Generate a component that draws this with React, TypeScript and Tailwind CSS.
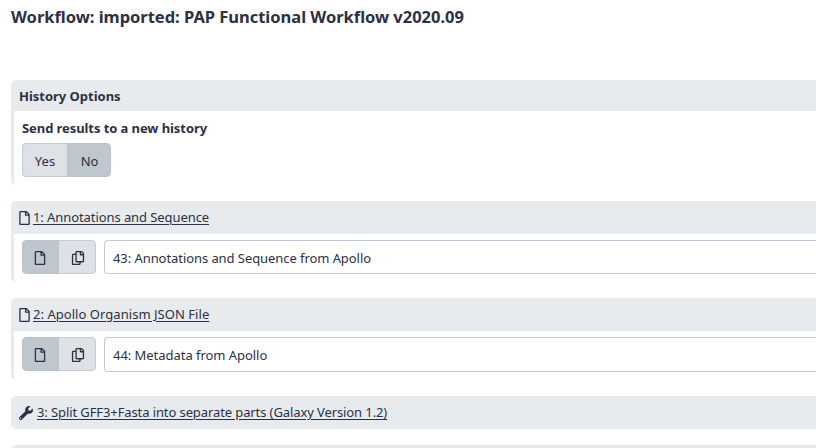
import type { ReactNode } from "react";
import { FaRegCopy, FaRegFile, FaWrench } from "react-icons/fa";

function Card({ header, className, headerClass, children }: { header: ReactNode; className: string; headerClass: string; children?: ReactNode }) {
  return (
    <section className={`shrink-0 overflow-hidden rounded-l-[5px] border-l-[3px] border-[#e8ebee] ${className}`}>
      <div className={`flex items-center bg-[#e8ebee] pl-[5px] ${headerClass}`}>{header}</div>
      {children}
    </section>
  );
}

function StepTitle({ icon, text, className }: { icon: ReactNode; text: string; className: string }) {
  return (
    <>
      {icon}
      <a className={`underline decoration-1 underline-offset-2 ${className}`}>{text}</a>
    </>
  );
}

function DataInput({ value, fieldClass, className }: { value: string; fieldClass: string; className: string }) {
  return (
    <div className="flex pl-2 pt-[6px]">
      <div className="flex h-[34px] w-[74px] shrink-0 overflow-hidden rounded-[4px]">
        <button className="flex w-[37px] items-center justify-center rounded-l-[4px] border border-[#b9c1cd] bg-[#bfc7ce] pr-px pt-[2px]">
          <FaRegFile className="size-[14px]" />
        </button>
        <button className="flex flex-1 items-center justify-center rounded-r-[4px] border border-l-0 border-[#c5cad9] bg-[#dee1e6] pt-[2px] pl-px">
          <FaRegCopy className="size-[14px]" />
        </button>
      </div>
      <div className={`ml-2 flex flex-1 items-center rounded-l-[4px] border border-r-0 border-[#c5c8da] pl-2 ${fieldClass}`}>
        <span className={className}>{value}</span>
      </div>
    </div>
  );
}

export default function App() {
  return (
    <main className="flex h-[448px] w-[816px] flex-col overflow-hidden whitespace-nowrap bg-white pl-[11px] font-['Noto_Sans',sans-serif] text-[13px] text-[#2c3143]">
      <h1 className="h-20 shrink-0 pt-[5px] text-[16.5px] leading-6 font-bold">
        <span className="tracking-[-0.02px]">Workflow: imported: PAP Functional Workflow v2020.09</span>
      </h1>

      <Card className="h-[105px]" headerClass="h-[31px]" header={<span className="pt-[2px] font-bold tracking-[-0.02px]">History Options</span>}>
        <div className="pl-2 pt-[7px]">
          <div className="h-[25px] leading-5 font-bold"><span className="tracking-[-0.08px]">Send results to a new history</span></div>
          <div className="flex h-[34px] w-[89px] overflow-hidden rounded-[4px]">
            <button className="w-[45px] rounded-l-[4px] border border-r-0 border-[#c5cad9] bg-[#dee1e6] pt-[3px]">Yes</button>
            <button className="flex-1 rounded-r-[4px] border border-[#b9c1cd] bg-[#bfc7ce] pl-px pt-[3px]">No</button>
          </div>
        </div>
      </Card>

      <Card
        className="mt-4 h-[81px]"
        headerClass="h-[33px]"
        header={<StepTitle icon={<FaRegFile className="mr-[3px] h-[14px] w-[11px]" />} text="1: Annotations and Sequence" className="tracking-[-0.08px]" />}
      >
        <DataInput value="43: Annotations and Sequence from Apollo" fieldClass="h-[34px]" className="pt-[3px] tracking-[-0.07px]" />
      </Card>

      <Card
        className="mt-4 h-[82px]"
        headerClass="h-[33px]"
        header={<StepTitle icon={<FaRegFile className="mr-[3px] h-[14px] w-[11px]" />} text="2: Apollo Organism JSON File" className="tracking-[0.04px]" />}
      >
        <DataInput value="44: Metadata from Apollo" fieldClass="h-[35px]" className="pt-[2px] tracking-[-0.04px]" />
      </Card>

      <Card
        className="mt-4 h-[33px]"
        headerClass="h-[33px]"
        header={<StepTitle icon={<FaWrench className="mr-[4px] size-[14px]" />} text="3: Split GFF3+Fasta into separate parts (Galaxy Version 1.2)" className="tracking-[-0.1px]" />}
      />
      <Card className="mt-4 h-[33px]" headerClass="h-[33px]" header={null} />
    </main>
  );
}
